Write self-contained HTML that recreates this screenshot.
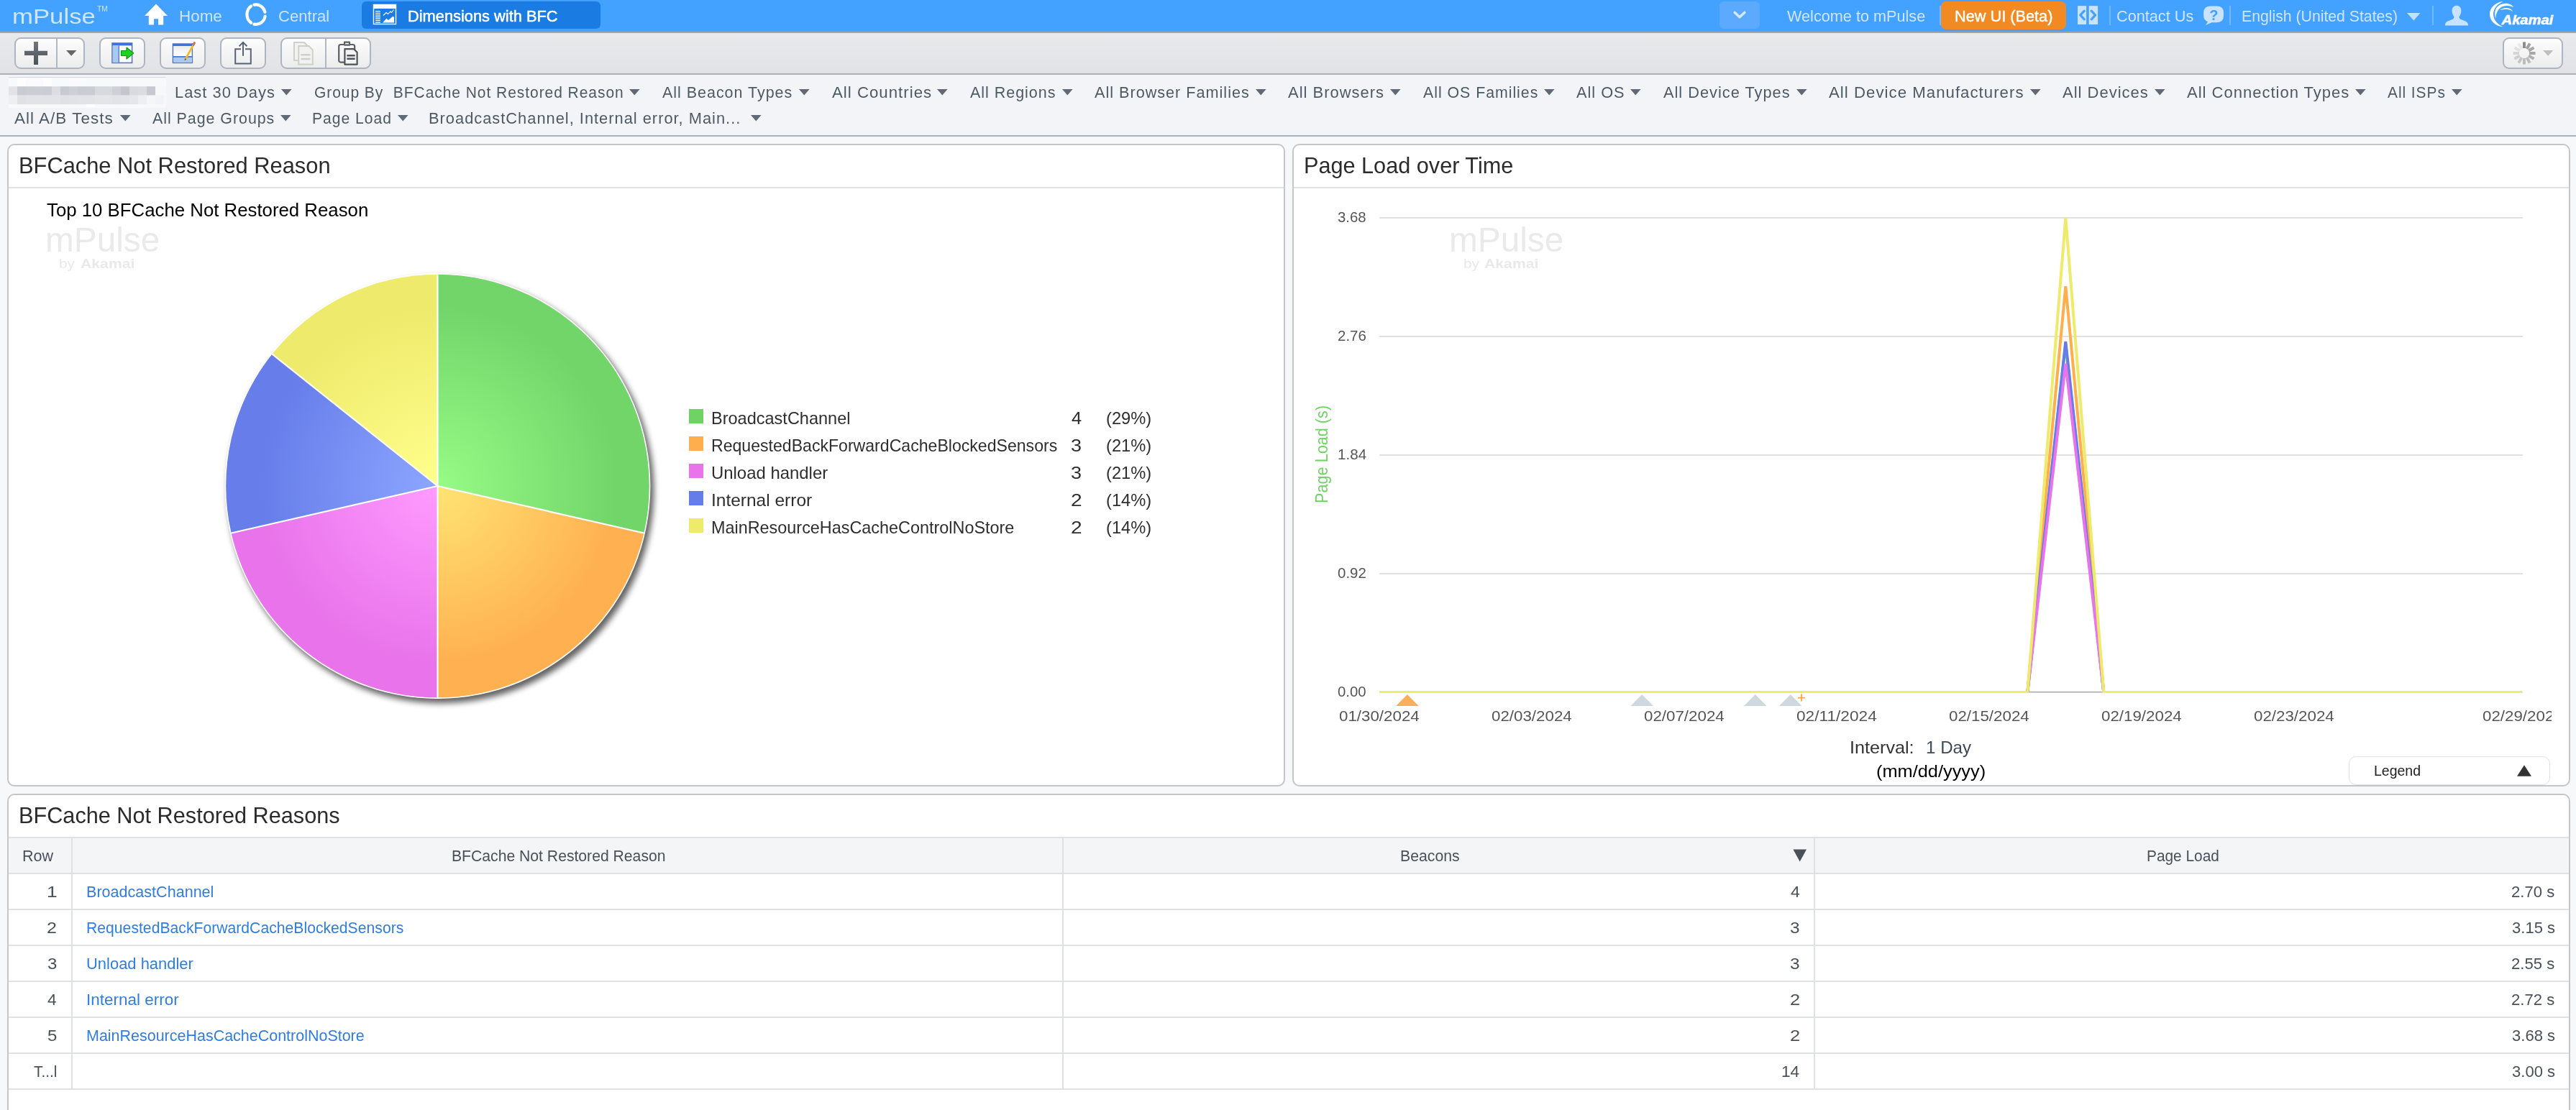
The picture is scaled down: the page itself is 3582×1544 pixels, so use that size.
<!DOCTYPE html>
<html><head><meta charset="utf-8"><title>mPulse - Dimensions with BFC</title>
<style>
html,body{margin:0;padding:0}
body{width:3582px;height:1544px;position:relative;overflow:hidden;background:#f7f8fa;font-family:"Liberation Sans", sans-serif;}
.t{position:absolute;white-space:nowrap;line-height:1;transform-origin:0 0;}

.btn{position:absolute;box-sizing:border-box;border:2px solid #adb5c0;border-radius:9px;background:linear-gradient(#fdfdfd,#ececec);}
.panel{position:absolute;box-sizing:border-box;border:2px solid #c6c6c6;border-radius:10px;background:#fff;}
</style></head><body>
<div style="position:absolute;left:0px;top:0px;width:3582px;height:44px;background:#43a1ff;"></div>
<div style="position:absolute;left:0px;top:44px;width:3582px;height:2px;background:#9ea5ad;"></div>
<div style="position:absolute;left:0px;top:46px;width:3582px;height:56px;background:linear-gradient(#e9eaec,#e1e2e6);"></div>
<div style="position:absolute;left:0px;top:102px;width:3582px;height:2px;background:#a9b1bb;"></div>
<div style="position:absolute;left:0px;top:104px;width:3582px;height:84px;background:#f3f4f8;"></div>
<div style="position:absolute;left:0px;top:188px;width:3582px;height:2px;background:#a9b1bb;"></div>
<span class="t" id="t0" style="left:16.7px;top:8px;font-size:30px;color:#cfe6ff;transform:scaleX(1.1580);font-weight:400;">mPulse</span>
<span class="t" id="t1" style="left:135.4px;top:8px;font-size:10px;color:#cfe6ff;transform:scaleX(1.0292);">TM</span>
<svg style="position:absolute;left:200px;top:5px;overflow:visible;" width="34" height="30" viewBox="0 0 34 30"><path d="M17 0.6 L33 17 L27.2 17 L27.2 29.4 L20 29.4 L20 21.2 L14.1 21.2 L14.1 29.4 L6.8 29.4 L6.8 17 L1 17 Z" fill="#fff"/></svg>
<span class="t" id="t2" style="left:248.5px;top:12px;font-size:22px;color:#cde5ff;transform:scaleX(1.0196);">Home</span>
<svg style="position:absolute;left:338px;top:2px;overflow:visible;" width="36" height="36" viewBox="0 0 36 36"><g fill="none" stroke="#fff" stroke-width="4.2" stroke-linecap="round"><path d="M15.46 4.60 A12.7 13.8 0 0 1 30.42 14.76"/><path d="M30.61 20.50 A12.7 13.8 0 0 1 15.46 31.60"/><path d="M11.18 29.67 A12.7 13.8 0 0 1 11.18 6.53"/></g></svg>
<span class="t" id="t3" style="left:386.9px;top:12px;font-size:22px;color:#cde5ff;transform:scaleX(1.0039);">Central</span>
<div style="position:absolute;left:503px;top:2px;width:332px;height:38px;background:#1a7be3;border-radius:6px;"></div>
<svg style="position:absolute;left:519px;top:6px;overflow:visible;" width="32" height="28" viewBox="0 0 32 28"><rect x="0.5" y="0.5" width="31" height="27" fill="none" stroke="#fff" stroke-width="1.4"/><rect x="0" y="0" width="32" height="6" fill="#fff"/><g stroke="#fff" stroke-width="1.3"><path d="M3 9.7H10M3 12.3H10M3 14.9H10M3 17.5H10M3 20.1H10M3 22.7H10M3 25.3H10"/></g><path d="M13 25.5 L18.5 19.5 L21 22 L27.5 16.5 L29 18 L29 25.5 Z" fill="#fff"/><path d="M14 15.5 L18 11.5 L20.5 13.5 L24 10 L25.5 11.5 L28.5 7.5" fill="none" stroke="#fff" stroke-width="1.1"/></svg>
<span class="t" id="t4" style="left:566.5px;top:12px;font-size:22px;color:#fff;transform:scaleX(0.9921);-webkit-text-stroke:0.5px #fff;">Dimensions with BFC</span>
<div style="position:absolute;left:2391px;top:2px;width:56px;height:38px;background:#5caaff;border-radius:6px;"></div>
<svg style="position:absolute;left:2410px;top:15px;overflow:visible;" width="18" height="12" viewBox="0 0 18 12"><path d="M2.2 2.5 L9 8.8 L15.8 2.5" fill="none" stroke="#d2e8ff" stroke-width="3.6" stroke-linecap="round" stroke-linejoin="round"/></svg>
<span class="t" id="t5" style="left:2485.3px;top:12px;font-size:22px;color:#cde5ff;transform:scaleX(0.9848);">Welcome to mPulse</span>
<div style="position:absolute;left:2697px;top:8px;width:2px;height:27.4px;background:#74b9ff;"></div>
<div style="position:absolute;left:2699px;top:2px;width:174px;height:39px;background:#f18a23;border-radius:7px;"></div>
<span class="t" id="t6" style="left:2717.8px;top:12px;font-size:22px;color:#fff;transform:scaleX(0.9875);-webkit-text-stroke:0.4px #fff;">New UI (Beta)</span>
<svg style="position:absolute;left:2889px;top:8px;overflow:visible;" width="28" height="26" viewBox="0 0 28 26"><rect x="0" y="0.2" width="12.1" height="25.8" fill="#c9e3ff"/><rect x="15.7" y="0.2" width="12.4" height="25.8" fill="#c9e3ff"/><path d="M9.2 7.2 L3.8 13 L9.2 18.8" fill="none" stroke="#43a1ff" stroke-width="3.3" stroke-linecap="round" stroke-linejoin="round"/><path d="M19.2 7.2 L24.6 13 L19.2 18.8" fill="none" stroke="#43a1ff" stroke-width="3.3" stroke-linecap="round" stroke-linejoin="round"/></svg>
<div style="position:absolute;left:2933px;top:8px;width:2px;height:27.4px;background:#74b9ff;"></div>
<span class="t" id="t7" style="left:2942.5px;top:12px;font-size:22px;color:#cde5ff;transform:scaleX(0.9858);">Contact Us</span>
<svg style="position:absolute;left:3064px;top:8px;overflow:visible;" width="30" height="28" viewBox="0 0 30 28"><path d="M10 0.4 H18.5 Q28 0.4 28 9.5 V14 Q28 23.2 18.5 23.2 H11.5 L3 27 L6 22.2 Q0.2 20.5 0.2 14 V9.5 Q0.2 0.4 10 0.4 Z" fill="#c9e3ff"/><text x="14.2" y="19.6" font-family="Liberation Sans, sans-serif" font-weight="bold" font-size="19.5" text-anchor="middle" fill="#43a1ff">?</text></svg>
<div style="position:absolute;left:3100px;top:8px;width:2px;height:27.4px;background:#74b9ff;"></div>
<span class="t" id="t8" style="left:3117.1px;top:12px;font-size:22px;color:#cde5ff;transform:scaleX(0.9647);">English (United States)</span>
<svg style="position:absolute;left:3347px;top:17.5px;overflow:visible;" width="19" height="11" viewBox="0 0 19 11"><path d="M0 0 H18.6 L9.3 10.6 Z" fill="#c2dfff"/></svg>
<div style="position:absolute;left:3382px;top:8px;width:2px;height:27.4px;background:#74b9ff;"></div>
<svg style="position:absolute;left:3399px;top:7px;overflow:visible;" width="34" height="29" viewBox="0 0 34 29"><path d="M17 0.8 C21.6 0.8 23.6 4.6 23.4 8.6 C23.2 12.2 21.8 14.6 20.6 16 C20.4 18 21 19.2 23.6 20.2 C28 21.8 32.6 23 33 27 L33 28.6 L1 28.6 L1 27 C1.4 23 6 21.8 10.4 20.2 C13 19.2 13.6 18 13.4 16 C12.2 14.6 10.8 12.2 10.6 8.6 C10.4 4.6 12.4 0.8 17 0.8 Z" fill="#c8e2ff"/></svg>
<svg style="position:absolute;left:3460px;top:1px;overflow:visible;" width="92" height="38" viewBox="0 0 92 38"><path d="M20.8 1 C9 2.5 2 10 2 18.6 C2 28 9.5 35.5 20.8 36.6 C12.5 33 7.1 26.5 7.1 18.6 C7.1 11 12.5 4.5 20.8 1 Z" fill="#fff"/><path d="M10.4 25 C8.4 19 8.6 12 13.5 7.5 C18.5 3 27 2.6 31.5 5.6 C33.2 6.8 34.4 8 35.1 9.3 C30.5 6.6 25 6.3 20.4 8 C14 10.4 10.4 17 10.4 25 Z" fill="#fff"/><path d="M16.1 13 C20 10 26 9 30 11 C32 12 33.4 13.4 34.1 14.9 C30.5 12.4 26.5 11.6 22.5 11.9 C20 12.1 18 12.5 16.1 13 Z" fill="#fff"/><text x="18.6" y="33.1" font-family="Liberation Sans, sans-serif" font-weight="bold" font-style="italic" font-size="18.8" textLength="71.6" lengthAdjust="spacingAndGlyphs" fill="#fff" stroke="#fff" stroke-width="0.5">Akamai</text></svg>
<div class="btn" style="left:20px;top:52px;width:98px;height:44px;"></div>
<div style="position:absolute;left:78.2px;top:54px;width:1.7px;height:40px;background:#b0b8c3;"></div>
<svg style="position:absolute;left:34px;top:58px;overflow:visible;" width="32" height="32" viewBox="0 0 32 32"><defs><linearGradient id="pg" x1="0" y1="0" x2="0" y2="1"><stop offset="0" stop-color="#6f767c"/><stop offset="1" stop-color="#4d5358"/></linearGradient></defs><path d="M13 0 H19 V12.8 H32 V19 H19 V32 H13 V19 H0 V12.8 H13 Z" fill="url(#pg)"/></svg>
<svg style="position:absolute;left:92px;top:70px;overflow:visible;" width="15" height="8" viewBox="0 0 15 8"><path d="M0 0 H14.4 L7.2 7.8 Z" fill="#666"/></svg>
<div class="btn" style="left:138px;top:52px;width:64px;height:44px;"></div>
<svg style="position:absolute;left:155px;top:59px;overflow:visible;" width="33" height="30" viewBox="0 0 33 30"><rect x="1" y="1" width="27.6" height="27.4" fill="#fff" stroke="#4f79cc" stroke-width="1.6"/><rect x="1" y="1" width="27.6" height="3.4" fill="#3f6fe0"/><rect x="1.8" y="4.4" width="8" height="23.4" fill="#a9c9ee"/><rect x="9.6" y="4.4" width="1.4" height="23.4" fill="#4f79cc"/><path d="M13.5 11.5 H21 V7 L30.6 15 L21 23 V18.5 H13.5 Z" fill="#1fd21f" stroke="#0c9c0c" stroke-width="1.2" stroke-linejoin="round"/></svg>
<div class="btn" style="left:222px;top:52px;width:64px;height:44px;"></div>
<svg style="position:absolute;left:239px;top:57px;overflow:visible;" width="34" height="32" viewBox="0 0 34 32"><defs><linearGradient id="wg" x1="0" y1="0" x2="0" y2="1"><stop offset="0" stop-color="#e6e6e6"/><stop offset="0.6" stop-color="#fff"/></linearGradient></defs><rect x="1.4" y="4" width="27" height="26.4" fill="url(#wg)" stroke="#5675b8" stroke-width="1.4"/><rect x="1.4" y="4" width="27" height="3" fill="#3f6fe0"/><rect x="2" y="22" width="25.8" height="8" fill="#a9c9ee"/><rect x="1.4" y="21" width="27" height="1.8" fill="#4f79cc"/><path d="M30.8 1 L33 2.6 L20.4 25.4 L17.6 27.2 L18 24 Z" fill="#f2b632"/><path d="M30.8 1 L33 2.6 L31.4 5.4 L29.2 4 Z" fill="#e0574f"/><path d="M29.2 4 L31.4 5.4 L30.4 7.2 L28.2 5.8 Z" fill="#8a8a8a"/><path d="M18 24 L20.4 25.4 L17.6 27.2 Z" fill="#7a5a30"/></svg>
<div class="btn" style="left:306px;top:52px;width:64px;height:44px;"></div>
<svg style="position:absolute;left:325px;top:57px;overflow:visible;" width="26" height="34" viewBox="0 0 26 34"><g fill="none" stroke="#566378" stroke-width="2"><path d="M10 11.2 H2.2 V31.6 H23.8 V11.2 H16"/><path d="M13 1.6 V20.8"/><path d="M7.6 7.2 L13 1.8 L18.4 7.2"/></g></svg>
<div class="btn" style="left:390px;top:52px;width:126px;height:44px;"></div>
<div style="position:absolute;left:452.4px;top:54px;width:1.7px;height:40px;background:#b0b8c3;"></div>
<svg style="position:absolute;left:407px;top:57px;overflow:visible;" width="30" height="34" viewBox="0 0 30 34"><g fill="#f2f2f0" stroke="#cfd0cb" stroke-width="2"><path d="M2 2 H16 L21.4 7.4 V27 H2 Z"/><path d="M8.2 7 H22.4 L27.8 12.4 V32.6 H8.2 Z"/></g><path d="M11.4 19.2 H24.6 M11.4 25 H24.6" stroke="#cfd0cb" stroke-width="2.4"/></svg>
<svg style="position:absolute;left:469px;top:57px;overflow:visible;" width="30" height="34" viewBox="0 0 30 34"><g fill="none" stroke="#5b6065" stroke-width="2.2" stroke-linejoin="round"><rect x="2.2" y="5" width="22" height="24.6" rx="2.6"/><rect x="10" y="1.6" width="7" height="4" fill="#f6f6f6"/></g><path d="M10.4 11.2 H23 L27.6 15.8 V32.6 H10.4 Z" fill="#f3f3f3" stroke="#4f5459" stroke-width="2.2" stroke-linejoin="round"/><path d="M13.4 20.2 H24.6 M13.4 24.8 H24.6" stroke="#4f5459" stroke-width="2.4"/></svg>
<div class="btn" style="left:3480px;top:52px;width:84px;height:44px;"></div>
<svg style="position:absolute;left:3494px;top:58px;overflow:visible;" width="32" height="32" viewBox="0 0 32 32"><g style="filter:blur(0.5px)"><path d="M16.00 9.00 L16.00 0.40" stroke="#8c8c8c" stroke-width="3.9"/><path d="M19.50 9.94 L23.80 2.49" stroke="#a0a0a0" stroke-width="3.9"/><path d="M22.06 12.50 L29.51 8.20" stroke="#a8a8a8" stroke-width="3.9"/><path d="M23.00 16.00 L31.60 16.00" stroke="#a6a6a6" stroke-width="3.9"/><path d="M22.06 19.50 L29.51 23.80" stroke="#b0b0b0" stroke-width="3.9"/><path d="M19.50 22.06 L23.80 29.51" stroke="#bababa" stroke-width="3.9"/><path d="M16.00 23.00 L16.00 31.60" stroke="#bcbcbc" stroke-width="3.9"/><path d="M12.50 22.06 L8.20 29.51" stroke="#c4c4c4" stroke-width="3.9"/><path d="M9.94 19.50 L2.49 23.80" stroke="#cecece" stroke-width="3.9"/><path d="M9.00 16.00 L0.40 16.00" stroke="#d4d4d4" stroke-width="3.9"/><path d="M9.94 12.50 L2.49 8.20" stroke="#e0e0e0" stroke-width="3.9"/><path d="M12.50 9.94 L8.20 2.49" stroke="#e9e9e9" stroke-width="3.9"/></g></svg>
<svg style="position:absolute;left:3536px;top:70px;overflow:visible;" width="15" height="8" viewBox="0 0 15 8"><path d="M0 0 H14.4 L7.2 7.8 Z" fill="#bfbfbf"/></svg>
<div style="position:absolute;left:12px;top:107px;width:219px;height:1.4px;background:#d7dbdf;"></div>
<div style="position:absolute;left:12px;top:108.6px;width:219px;height:41px;background:#f8f9fb;"></div>
<svg style="position:absolute;left:0px;top:0px;overflow:visible;" width="240" height="152" viewBox="0 0 240 152"><rect x="12" y="108.6" width="12.3" height="11.9" fill="#f8f9fb"/><rect x="24" y="108.6" width="12.3" height="11.9" fill="#fdfdfe"/><rect x="36" y="108.6" width="12.3" height="11.9" fill="#fbfbfd"/><rect x="48" y="108.6" width="12.3" height="11.9" fill="#fbfbfd"/><rect x="60" y="108.6" width="12.3" height="11.9" fill="#fdfdfe"/><rect x="72" y="108.6" width="12.3" height="11.9" fill="#f8f9fb"/><rect x="84" y="108.6" width="12.3" height="11.9" fill="#f8f9fb"/><rect x="96" y="108.6" width="12.3" height="11.9" fill="#fafafc"/><rect x="108" y="108.6" width="12.3" height="11.9" fill="#f9fafc"/><rect x="120" y="108.6" width="12.3" height="11.9" fill="#f8f9fb"/><rect x="132" y="108.6" width="12.3" height="11.9" fill="#f8f9fb"/><rect x="144" y="108.6" width="12.3" height="11.9" fill="#f8f9fb"/><rect x="156" y="108.6" width="12.3" height="11.9" fill="#f8f9fb"/><rect x="168" y="108.6" width="12.3" height="11.9" fill="#f8f9fb"/><rect x="180" y="108.6" width="12.3" height="11.9" fill="#f8f9fb"/><rect x="192" y="108.6" width="12.3" height="11.9" fill="#f8f9fb"/><rect x="204" y="108.6" width="12.3" height="11.9" fill="#f8f9fb"/><rect x="216" y="108.6" width="12.3" height="11.9" fill="#f8f9fb"/><rect x="228" y="108.6" width="3.3" height="11.9" fill="#f8f9fb"/><rect x="12" y="120.2" width="12.3" height="12.6" fill="#e2e3e7"/><rect x="24" y="120.2" width="12.3" height="12.6" fill="#c8cbd2"/><rect x="36" y="120.2" width="12.3" height="12.6" fill="#cacdd4"/><rect x="48" y="120.2" width="12.3" height="12.6" fill="#cbced4"/><rect x="60" y="120.2" width="12.3" height="12.6" fill="#cacdd3"/><rect x="72" y="120.2" width="12.3" height="12.6" fill="#dcdde2"/><rect x="84" y="120.2" width="12.3" height="12.6" fill="#c7cbd1"/><rect x="96" y="120.2" width="12.3" height="12.6" fill="#cdd0d6"/><rect x="108" y="120.2" width="12.3" height="12.6" fill="#c9ccd3"/><rect x="120" y="120.2" width="12.3" height="12.6" fill="#c9ccd3"/><rect x="132" y="120.2" width="12.3" height="12.6" fill="#d6d9dd"/><rect x="144" y="120.2" width="12.3" height="12.6" fill="#d7dadd"/><rect x="156" y="120.2" width="12.3" height="12.6" fill="#cfd1d7"/><rect x="168" y="120.2" width="12.3" height="12.6" fill="#c3c7cd"/><rect x="180" y="120.2" width="12.3" height="12.6" fill="#d9dade"/><rect x="192" y="120.2" width="12.3" height="12.6" fill="#dbdcdf"/><rect x="204" y="120.2" width="12.3" height="12.6" fill="#c5cad0"/><rect x="216" y="120.2" width="12.3" height="12.6" fill="#f7f8fa"/><rect x="228" y="120.2" width="3.3" height="12.6" fill="#f7f8fa"/><rect x="12" y="132.5" width="12.3" height="12.7" fill="#eeeff2"/><rect x="24" y="132.5" width="12.3" height="12.7" fill="#e0e1e5"/><rect x="36" y="132.5" width="12.3" height="12.7" fill="#e2e3e7"/><rect x="48" y="132.5" width="12.3" height="12.7" fill="#e2e3e7"/><rect x="60" y="132.5" width="12.3" height="12.7" fill="#e2e3e7"/><rect x="72" y="132.5" width="12.3" height="12.7" fill="#e2e3e7"/><rect x="84" y="132.5" width="12.3" height="12.7" fill="#e0e1e5"/><rect x="96" y="132.5" width="12.3" height="12.7" fill="#e1e2e6"/><rect x="108" y="132.5" width="12.3" height="12.7" fill="#e2e3e7"/><rect x="120" y="132.5" width="12.3" height="12.7" fill="#e2e3e7"/><rect x="132" y="132.5" width="12.3" height="12.7" fill="#e3e5e8"/><rect x="144" y="132.5" width="12.3" height="12.7" fill="#e3e5e8"/><rect x="156" y="132.5" width="12.3" height="12.7" fill="#e1e3e6"/><rect x="168" y="132.5" width="12.3" height="12.7" fill="#e2e4e7"/><rect x="180" y="132.5" width="12.3" height="12.7" fill="#e4e6e9"/><rect x="192" y="132.5" width="12.3" height="12.7" fill="#eeeff2"/><rect x="204" y="132.5" width="12.3" height="12.7" fill="#f5f6f8"/><rect x="216" y="132.5" width="12.3" height="12.7" fill="#f2f3f6"/><rect x="228" y="132.5" width="3.3" height="12.7" fill="#f7f8fa"/><rect x="120" y="144.9" width="12" height="4.6" fill="#fefefe"/></svg>
<span class="t" id="t9" style="left:242.8px;top:118px;font-size:22px;color:#4d5964;transform:scaleX(0.9963);letter-spacing:1px;">Last 30 Days</span>
<svg style="position:absolute;left:390.6px;top:124.20000000000002px;overflow:visible;" width="15" height="9" viewBox="0 0 15 9"><path d="M0 0 H14.6 L7.3 8.4 Z" fill="#5f6a76"/></svg>
<span class="t" id="t10" style="left:437.4px;top:118px;font-size:22px;color:#4d5964;transform:scaleX(0.9538);letter-spacing:1px;">Group By&nbsp; BFCache Not Restored Reason</span>
<svg style="position:absolute;left:875px;top:124.20000000000002px;overflow:visible;" width="15" height="9" viewBox="0 0 15 9"><path d="M0 0 H14.6 L7.3 8.4 Z" fill="#5f6a76"/></svg>
<span class="t" id="t11" style="left:921.4px;top:118px;font-size:22px;color:#4d5964;transform:scaleX(0.9763);letter-spacing:1px;">All Beacon Types</span>
<svg style="position:absolute;left:1111px;top:124.20000000000002px;overflow:visible;" width="15" height="9" viewBox="0 0 15 9"><path d="M0 0 H14.6 L7.3 8.4 Z" fill="#5f6a76"/></svg>
<span class="t" id="t12" style="left:1156.5px;top:118px;font-size:22px;color:#4d5964;transform:scaleX(1.0104);letter-spacing:1px;">All Countries</span>
<svg style="position:absolute;left:1303.4px;top:124.20000000000002px;overflow:visible;" width="15" height="9" viewBox="0 0 15 9"><path d="M0 0 H14.6 L7.3 8.4 Z" fill="#5f6a76"/></svg>
<span class="t" id="t13" style="left:1349.3px;top:118px;font-size:22px;color:#4d5964;transform:scaleX(0.9764);letter-spacing:1px;">All Regions</span>
<svg style="position:absolute;left:1477px;top:124.20000000000002px;overflow:visible;" width="15" height="9" viewBox="0 0 15 9"><path d="M0 0 H14.6 L7.3 8.4 Z" fill="#5f6a76"/></svg>
<span class="t" id="t14" style="left:1521.9px;top:118px;font-size:22px;color:#4d5964;transform:scaleX(0.9842);letter-spacing:1px;">All Browser Families</span>
<svg style="position:absolute;left:1746px;top:124.20000000000002px;overflow:visible;" width="15" height="9" viewBox="0 0 15 9"><path d="M0 0 H14.6 L7.3 8.4 Z" fill="#5f6a76"/></svg>
<span class="t" id="t15" style="left:1790.9px;top:118px;font-size:22px;color:#4d5964;transform:scaleX(0.9984);letter-spacing:1px;">All Browsers</span>
<svg style="position:absolute;left:1932.7px;top:124.20000000000002px;overflow:visible;" width="15" height="9" viewBox="0 0 15 9"><path d="M0 0 H14.6 L7.3 8.4 Z" fill="#5f6a76"/></svg>
<span class="t" id="t16" style="left:1978.6px;top:118px;font-size:22px;color:#4d5964;transform:scaleX(0.9693);letter-spacing:1px;">All OS Families</span>
<svg style="position:absolute;left:2146.7px;top:124.20000000000002px;overflow:visible;" width="15" height="9" viewBox="0 0 15 9"><path d="M0 0 H14.6 L7.3 8.4 Z" fill="#5f6a76"/></svg>
<span class="t" id="t17" style="left:2192.1px;top:118px;font-size:22px;color:#4d5964;transform:scaleX(0.9893);letter-spacing:1px;">All OS</span>
<svg style="position:absolute;left:2267.3px;top:124.20000000000002px;overflow:visible;" width="15" height="9" viewBox="0 0 15 9"><path d="M0 0 H14.6 L7.3 8.4 Z" fill="#5f6a76"/></svg>
<span class="t" id="t18" style="left:2313.4px;top:118px;font-size:22px;color:#4d5964;transform:scaleX(0.9905);letter-spacing:1px;">All Device Types</span>
<svg style="position:absolute;left:2497.6px;top:124.20000000000002px;overflow:visible;" width="15" height="9" viewBox="0 0 15 9"><path d="M0 0 H14.6 L7.3 8.4 Z" fill="#5f6a76"/></svg>
<span class="t" id="t19" style="left:2542.9px;top:118px;font-size:22px;color:#4d5964;transform:scaleX(1.0112);letter-spacing:1px;">All Device Manufacturers</span>
<svg style="position:absolute;left:2822.5px;top:124.20000000000002px;overflow:visible;" width="15" height="9" viewBox="0 0 15 9"><path d="M0 0 H14.6 L7.3 8.4 Z" fill="#5f6a76"/></svg>
<span class="t" id="t20" style="left:2867.8px;top:118px;font-size:22px;color:#4d5964;transform:scaleX(1.0002);letter-spacing:1px;">All Devices</span>
<svg style="position:absolute;left:2995.7px;top:124.20000000000002px;overflow:visible;" width="15" height="9" viewBox="0 0 15 9"><path d="M0 0 H14.6 L7.3 8.4 Z" fill="#5f6a76"/></svg>
<span class="t" id="t21" style="left:3041.0px;top:118px;font-size:22px;color:#4d5964;transform:scaleX(1.0003);letter-spacing:1px;">All Connection Types</span>
<svg style="position:absolute;left:3274.9px;top:124.20000000000002px;overflow:visible;" width="15" height="9" viewBox="0 0 15 9"><path d="M0 0 H14.6 L7.3 8.4 Z" fill="#5f6a76"/></svg>
<span class="t" id="t22" style="left:3320.2px;top:118px;font-size:22px;color:#4d5964;transform:scaleX(0.9508);letter-spacing:1px;">All ISPs</span>
<svg style="position:absolute;left:3408.8px;top:124.20000000000002px;overflow:visible;" width="15" height="9" viewBox="0 0 15 9"><path d="M0 0 H14.6 L7.3 8.4 Z" fill="#5f6a76"/></svg>
<span class="t" id="t23" style="left:20.3px;top:154px;font-size:22px;color:#4d5964;transform:scaleX(1.0215);letter-spacing:1px;">All A/B Tests</span>
<svg style="position:absolute;left:166.7px;top:160.20000000000002px;overflow:visible;" width="15" height="9" viewBox="0 0 15 9"><path d="M0 0 H14.6 L7.3 8.4 Z" fill="#5f6a76"/></svg>
<span class="t" id="t24" style="left:211.7px;top:154px;font-size:22px;color:#4d5964;transform:scaleX(0.9719);letter-spacing:1px;">All Page Groups</span>
<svg style="position:absolute;left:390.3px;top:160.20000000000002px;overflow:visible;" width="15" height="9" viewBox="0 0 15 9"><path d="M0 0 H14.6 L7.3 8.4 Z" fill="#5f6a76"/></svg>
<span class="t" id="t25" style="left:434.0px;top:154px;font-size:22px;color:#4d5964;transform:scaleX(0.9612);letter-spacing:1px;">Page Load</span>
<svg style="position:absolute;left:553px;top:160.20000000000002px;overflow:visible;" width="15" height="9" viewBox="0 0 15 9"><path d="M0 0 H14.6 L7.3 8.4 Z" fill="#5f6a76"/></svg>
<span class="t" id="t26" style="left:595.9px;top:154px;font-size:22px;color:#4d5964;transform:scaleX(0.9933);letter-spacing:1px;">BroadcastChannel, Internal error, Main...</span>
<svg style="position:absolute;left:1044.4px;top:160.20000000000002px;overflow:visible;" width="15" height="9" viewBox="0 0 15 9"><path d="M0 0 H14.6 L7.3 8.4 Z" fill="#5f6a76"/></svg>
<div class="panel" style="left:10px;top:200px;width:1777px;height:894px;"></div>
<div class="panel" style="left:1797px;top:200px;width:1777px;height:894px;"></div>
<div class="panel" style="left:10px;top:1104px;width:3564px;height:470px;"></div>
<div style="position:absolute;left:12px;top:260px;width:1773px;height:2px;background:#dfe1e4;"></div>
<div style="position:absolute;left:1799px;top:260px;width:1773px;height:2px;background:#dfe1e4;"></div>
<div style="position:absolute;left:12px;top:1164px;width:3560px;height:2px;background:#dfe1e4;"></div>
<span class="t" id="t27" style="left:25.8px;top:214px;font-size:32px;color:#2b2b2b;transform:scaleX(0.9634);">BFCache Not Restored Reason</span>
<span class="t" id="t28" style="left:1813.3px;top:214px;font-size:32px;color:#2b2b2b;transform:scaleX(0.9576);">Page Load over Time</span>
<span class="t" id="t29" style="left:25.8px;top:1118px;font-size:32px;color:#2b2b2b;transform:scaleX(0.9584);">BFCache Not Restored Reasons</span>
<span class="t" id="t30" style="left:64.8px;top:279px;font-size:26px;color:#000;transform:scaleX(0.9919);">Top 10 BFCache Not Restored Reason</span>
<span class="t" id="t31" style="left:63.0px;top:310px;font-size:48px;color:#eaeaea;transform:scaleX(0.9952);filter:blur(0.7px);">mPulse</span>
<span class="t" id="t32" style="left:82.3px;top:357px;font-size:19px;color:#e9e9e9;transform:scaleX(1.0895);filter:blur(0.6px);">by</span>
<span class="t" id="t33" style="left:111.5px;top:357px;font-size:19px;color:#e9e9e9;font-weight:700;transform:scaleX(1.1157);filter:blur(0.6px);">Akamai</span>
<span class="t" id="t34" style="left:2015.4px;top:310px;font-size:48px;color:#eaeaea;transform:scaleX(0.9952);filter:blur(0.7px);">mPulse</span>
<span class="t" id="t35" style="left:2034.7px;top:357px;font-size:19px;color:#e9e9e9;transform:scaleX(1.0895);filter:blur(0.6px);">by</span>
<span class="t" id="t36" style="left:2063.9px;top:357px;font-size:19px;color:#e9e9e9;font-weight:700;transform:scaleX(1.1157);filter:blur(0.6px);">Akamai</span>
<svg style="position:absolute;left:0px;top:0px;overflow:visible;" width="1300" height="1100" viewBox="0 0 1300 1100"><defs><radialGradient id="g0" gradientUnits="userSpaceOnUse" cx="608.5" cy="676.0" r="294.3"><stop offset="0" stop-color="#97fb86"/><stop offset="0.85" stop-color="#72d56a"/><stop offset="1" stop-color="#72d56a"/></radialGradient><radialGradient id="g1" gradientUnits="userSpaceOnUse" cx="608.5" cy="676.0" r="294.3"><stop offset="0" stop-color="#ffe473"/><stop offset="0.85" stop-color="#ffb050"/><stop offset="1" stop-color="#ffb050"/></radialGradient><radialGradient id="g2" gradientUnits="userSpaceOnUse" cx="608.5" cy="676.0" r="294.3"><stop offset="0" stop-color="#ff9bff"/><stop offset="0.85" stop-color="#e873ea"/><stop offset="1" stop-color="#e873ea"/></radialGradient><radialGradient id="g3" gradientUnits="userSpaceOnUse" cx="608.5" cy="676.0" r="294.3"><stop offset="0" stop-color="#8da6ff"/><stop offset="0.85" stop-color="#667dea"/><stop offset="1" stop-color="#667dea"/></radialGradient><radialGradient id="g4" gradientUnits="userSpaceOnUse" cx="608.5" cy="676.0" r="294.3"><stop offset="0" stop-color="#ffff8c"/><stop offset="0.85" stop-color="#eeea6c"/><stop offset="1" stop-color="#eeea6c"/></radialGradient><filter id="ps" x="-10%" y="-10%" width="125%" height="125%"><feGaussianBlur stdDeviation="4.2"/></filter></defs><circle cx="613.0" cy="682.0" r="296.3" fill="#000" opacity="0.62" filter="url(#ps)"/><circle cx="608.5" cy="676.0" r="295.90000000000003" fill="#fff"/><path d="M608.5 676.0 L608.50 381.70 A294.3 294.3 0 0 1 895.42 741.49 Z" fill="url(#g0)"/><path d="M608.5 676.0 L895.42 741.49 A294.3 294.3 0 0 1 608.50 970.30 Z" fill="url(#g1)"/><path d="M608.5 676.0 L608.50 970.30 A294.3 294.3 0 0 1 321.58 741.49 Z" fill="url(#g2)"/><path d="M608.5 676.0 L321.58 741.49 A294.3 294.3 0 0 1 378.41 492.51 Z" fill="url(#g3)"/><path d="M608.5 676.0 L378.41 492.51 A294.3 294.3 0 0 1 608.50 381.70 Z" fill="url(#g4)"/><path d="M608.5 676.0 L608.50 381.70" stroke="#fff" stroke-width="2.2"/><path d="M608.5 676.0 L895.42 741.49" stroke="#fff" stroke-width="2.2"/><path d="M608.5 676.0 L608.50 970.30" stroke="#fff" stroke-width="2.2"/><path d="M608.5 676.0 L321.58 741.49" stroke="#fff" stroke-width="2.2"/><path d="M608.5 676.0 L378.41 492.51" stroke="#fff" stroke-width="2.2"/></svg>
<div style="position:absolute;left:958px;top:569px;width:20px;height:20px;background:#70d265;"></div>
<span class="t" id="t37" style="left:989.1px;top:570px;font-size:24px;color:#2e2e2e;transform:scaleX(0.9799);">BroadcastChannel</span>
<span class="t" id="t38" style="left:1489.8px;top:570px;font-size:24px;color:#2e2e2e;transform:scaleX(1.0574);">4</span>
<span class="t" id="t39" style="left:1537.8px;top:570px;font-size:24px;color:#2e2e2e;transform:scaleX(0.9860);">(29%)</span>
<div style="position:absolute;left:958px;top:607px;width:20px;height:20px;background:#ffae4e;"></div>
<span class="t" id="t40" style="left:989.1px;top:608px;font-size:24px;color:#2e2e2e;transform:scaleX(0.9619);">RequestedBackForwardCacheBlockedSensors</span>
<span class="t" id="t41" style="left:1489.4px;top:608px;font-size:24px;color:#2e2e2e;transform:scaleX(1.1237);">3</span>
<span class="t" id="t42" style="left:1537.8px;top:608px;font-size:24px;color:#2e2e2e;transform:scaleX(0.9860);">(21%)</span>
<div style="position:absolute;left:958px;top:645px;width:20px;height:20px;background:#e873ea;"></div>
<span class="t" id="t43" style="left:989.2px;top:646px;font-size:24px;color:#2e2e2e;transform:scaleX(0.9960);">Unload handler</span>
<span class="t" id="t44" style="left:1489.4px;top:646px;font-size:24px;color:#2e2e2e;transform:scaleX(1.1237);">3</span>
<span class="t" id="t45" style="left:1537.8px;top:646px;font-size:24px;color:#2e2e2e;transform:scaleX(0.9860);">(21%)</span>
<div style="position:absolute;left:958px;top:683px;width:20px;height:20px;background:#657de8;"></div>
<span class="t" id="t46" style="left:988.7px;top:684px;font-size:24px;color:#2e2e2e;transform:scaleX(1.0202);">Internal error</span>
<span class="t" id="t47" style="left:1489.0px;top:684px;font-size:24px;color:#2e2e2e;transform:scaleX(1.1695);">2</span>
<span class="t" id="t48" style="left:1537.8px;top:684px;font-size:24px;color:#2e2e2e;transform:scaleX(0.9860);">(14%)</span>
<div style="position:absolute;left:958px;top:721px;width:20px;height:20px;background:#eeea6a;"></div>
<span class="t" id="t49" style="left:989.1px;top:722px;font-size:24px;color:#2e2e2e;transform:scaleX(0.9749);">MainResourceHasCacheControlNoStore</span>
<span class="t" id="t50" style="left:1489.0px;top:722px;font-size:24px;color:#2e2e2e;transform:scaleX(1.1695);">2</span>
<span class="t" id="t51" style="left:1537.8px;top:722px;font-size:24px;color:#2e2e2e;transform:scaleX(0.9860);">(14%)</span>
<svg style="position:absolute;left:0px;top:0px;overflow:visible;" width="3582" height="1100" viewBox="0 0 3582 1100"><defs><clipPath id="plot"><rect x="1900" y="302" width="1700" height="661"/></clipPath></defs><path d="M1918 303.0 H3508" stroke="#e1e1e1" stroke-width="2"/><path d="M1918 468.0 H3508" stroke="#e1e1e1" stroke-width="2"/><path d="M1918 633.0 H3508" stroke="#e1e1e1" stroke-width="2"/><path d="M1918 798.0 H3508" stroke="#e1e1e1" stroke-width="2"/><path d="M1918 963.0 H3508" stroke="#e1e1e1" stroke-width="2"/><g clip-path="url(#plot)"><path d="M1918 963.0 L2819.3 963.0 L2872.3 478.8 L2925.3 963.0 L3507 963.0" fill="none" stroke="#70d265" stroke-width="4" stroke-linejoin="bevel"/><path d="M1918 963.0 L2819.3 963.0 L2872.3 398.1 L2925.3 963.0 L3507 963.0" fill="none" stroke="#ffae4e" stroke-width="4" stroke-linejoin="bevel"/><path d="M1918 963.0 L2819.3 963.0 L2872.3 475.2 L2925.3 963.0 L3507 963.0" fill="none" stroke="#657de8" stroke-width="4" stroke-linejoin="bevel"/><path d="M1918 963.0 L2819.3 963.0 L2872.3 505.7 L2925.3 963.0 L3507 963.0" fill="none" stroke="#e873ea" stroke-width="4" stroke-linejoin="bevel"/><path d="M1918 963.0 L2819.3 963.0 L2872.3 303.0 L2925.3 963.0 L3507 963.0" fill="none" stroke="#eeea6a" stroke-width="4" stroke-linejoin="bevel"/></g><path d="M2821.8 962.5 H2922.8" stroke="#9a9a9a" stroke-width="1"/><path d="M1941.1 981.9 L1956.9 966 L1972.7 981.9 Z" fill="#fcae5b"/><path d="M2267.4 981.9 L2283.2 966 L2299.0 981.9 Z" fill="#cfd8dc"/><path d="M2425.0 981.9 L2440.8 966 L2456.6 981.9 Z" fill="#cfd8dc"/><path d="M2473.9 981.9 L2489.7 966 L2505.5 981.9 Z" fill="#cfd8dc"/><path d="M2500 970.6 H2510 M2505 965.6 V975.6" stroke="#f7a54f" stroke-width="1.8"/></svg>
<span class="t" id="t52" style="left:1860.4px;top:291px;font-size:21px;color:#555;transform:scaleX(0.9703);">3.68</span>
<span class="t" id="t53" style="left:1860.2px;top:456px;font-size:21px;color:#555;transform:scaleX(0.9770);">2.76</span>
<span class="t" id="t54" style="left:1859.6px;top:621px;font-size:21px;color:#555;transform:scaleX(0.9829);">1.84</span>
<span class="t" id="t55" style="left:1860.4px;top:786px;font-size:21px;color:#555;transform:scaleX(0.9744);">0.92</span>
<span class="t" id="t56" style="left:1860.4px;top:951px;font-size:21px;color:#555;transform:scaleX(0.9685);">0.00</span>
<span class="t" id="t57" style="left:1861.9px;top:985px;font-size:21px;color:#555;transform:scaleX(1.0629);">01/30/2024</span>
<span class="t" id="t58" style="left:2073.9px;top:985px;font-size:21px;color:#555;transform:scaleX(1.0629);">02/03/2024</span>
<span class="t" id="t59" style="left:2285.9px;top:985px;font-size:21px;color:#555;transform:scaleX(1.0629);">02/07/2024</span>
<span class="t" id="t60" style="left:2497.9px;top:985px;font-size:21px;color:#555;transform:scaleX(1.0792);">02/11/2024</span>
<span class="t" id="t61" style="left:2709.9px;top:985px;font-size:21px;color:#555;transform:scaleX(1.0629);">02/15/2024</span>
<span class="t" id="t62" style="left:2921.9px;top:985px;font-size:21px;color:#555;transform:scaleX(1.0629);">02/19/2024</span>
<span class="t" id="t63" style="left:3133.9px;top:985px;font-size:21px;color:#555;transform:scaleX(1.0629);">02/23/2024</span>
<div style="position:absolute;left:3440px;top:980px;width:108px;height:32px;overflow:hidden;">
<span class="t" id="t64" style="left:11.7px;top:5px;font-size:21px;color:#555;transform:scaleX(1.0629);">02/29/2024</span>
</div>
<div style="position:absolute;left:1845.6px;top:631.8px;width:0;height:0;transform:rotate(-90deg);">
<span class="t" id="t65" style="left:-68.3px;top:-20px;font-size:24px;color:#70d265;transform:scaleX(0.9029);">Page Load (s)</span>
</div>
<span class="t" id="t66" style="left:2571.7px;top:1028px;font-size:24px;color:#333;transform:scaleX(1.0498);">Interval:</span>
<span class="t" id="t67" style="left:2678.0px;top:1028px;font-size:24px;color:#3e4959;transform:scaleX(1.0061);">1 Day</span>
<span class="t" id="t68" style="left:2608.9px;top:1061px;font-size:24px;color:#000;transform:scaleX(1.0566);">(mm/dd/yyyy)</span>
<div style="position:absolute;left:3266px;top:1052px;width:280px;height:39.5px;box-sizing:border-box;border:1.5px solid #e2e4e7;border-radius:10px;background:#fff;"></div>
<span class="t" id="t69" style="left:3301.4px;top:1062px;font-size:20px;color:#222;transform:scaleX(0.9746);">Legend</span>
<svg style="position:absolute;left:3499px;top:1064px;overflow:visible;" width="22" height="17" viewBox="0 0 22 17"><path d="M1 15.7 L11 0.3 L21 15.7 Z" fill="#333"/></svg>
<div style="position:absolute;left:12px;top:1166px;width:3560px;height:48px;background:#f3f5f7;"></div>
<div style="position:absolute;left:12px;top:1214px;width:3560px;height:2px;background:#dfe1e4;"></div>
<div style="position:absolute;left:12px;top:1264px;width:3560px;height:2px;background:#dfe1e4;"></div>
<div style="position:absolute;left:12px;top:1314px;width:3560px;height:2px;background:#dfe1e4;"></div>
<div style="position:absolute;left:12px;top:1364px;width:3560px;height:2px;background:#dfe1e4;"></div>
<div style="position:absolute;left:12px;top:1414px;width:3560px;height:2px;background:#dfe1e4;"></div>
<div style="position:absolute;left:12px;top:1464px;width:3560px;height:2px;background:#dfe1e4;"></div>
<div style="position:absolute;left:12px;top:1514px;width:3560px;height:2px;background:#dfe1e4;"></div>
<div style="position:absolute;left:99px;top:1166px;width:2px;height:350px;background:#dfe1e4;"></div>
<div style="position:absolute;left:1477px;top:1166px;width:2px;height:350px;background:#dfe1e4;"></div>
<div style="position:absolute;left:2522px;top:1166px;width:2px;height:350px;background:#dfe1e4;"></div>
<span class="t" id="t70" style="left:30.9px;top:1180px;font-size:22px;color:#4a5058;transform:scaleX(0.9772);">Row</span>
<span class="t" id="t71" style="left:628.2px;top:1180px;font-size:22px;color:#4a5058;transform:scaleX(0.9616);">BFCache Not Restored Reason</span>
<span class="t" id="t72" style="left:1946.5px;top:1180px;font-size:22px;color:#4a5058;transform:scaleX(0.9648);">Beacons</span>
<span class="t" id="t73" style="left:2985.2px;top:1180px;font-size:22px;color:#4a5058;transform:scaleX(0.9475);">Page Load</span>
<svg style="position:absolute;left:2493px;top:1181px;overflow:visible;" width="20" height="18" viewBox="0 0 20 18"><path d="M0.4 0.4 H19 L9.7 17.4 Z" fill="#4a5058"/></svg>
<span class="t" id="t74" style="left:64.6px;top:1230px;font-size:22px;color:#4a5058;transform:scaleX(1.2000);">1</span>
<span class="t" id="t75" style="left:120.1px;top:1230px;font-size:22px;color:#2f7de1;transform:scaleX(0.9801);">BroadcastChannel</span>
<span class="t" id="t76" style="left:2489.8px;top:1230px;font-size:22px;color:#4a5058;transform:scaleX(1.0450);">4</span>
<span class="t" id="t77" style="left:3492.2px;top:1230px;font-size:22px;color:#4a5058;transform:scaleX(1.0063);">2.70 s</span>
<span class="t" id="t78" style="left:65.3px;top:1280px;font-size:22px;color:#4a5058;transform:scaleX(1.1358);">2</span>
<span class="t" id="t79" style="left:120.2px;top:1280px;font-size:22px;color:#2f7de1;transform:scaleX(0.9623);">RequestedBackForwardCacheBlockedSensors</span>
<span class="t" id="t80" style="left:2489.4px;top:1280px;font-size:22px;color:#4a5058;transform:scaleX(1.1105);">3</span>
<span class="t" id="t81" style="left:3492.5px;top:1280px;font-size:22px;color:#4a5058;transform:scaleX(1.0016);">3.15 s</span>
<span class="t" id="t82" style="left:65.7px;top:1330px;font-size:22px;color:#4a5058;transform:scaleX(1.0914);">3</span>
<span class="t" id="t83" style="left:120.2px;top:1330px;font-size:22px;color:#2f7de1;transform:scaleX(0.9975);">Unload handler</span>
<span class="t" id="t84" style="left:2489.4px;top:1330px;font-size:22px;color:#4a5058;transform:scaleX(1.1105);">3</span>
<span class="t" id="t85" style="left:3492.2px;top:1330px;font-size:22px;color:#4a5058;transform:scaleX(1.0063);">2.55 s</span>
<span class="t" id="t86" style="left:66.1px;top:1380px;font-size:22px;color:#4a5058;transform:scaleX(1.0270);">4</span>
<span class="t" id="t87" style="left:119.8px;top:1380px;font-size:22px;color:#2f7de1;transform:scaleX(1.0230);">Internal error</span>
<span class="t" id="t88" style="left:2489.0px;top:1380px;font-size:22px;color:#4a5058;transform:scaleX(1.1557);">2</span>
<span class="t" id="t89" style="left:3492.2px;top:1380px;font-size:22px;color:#4a5058;transform:scaleX(1.0063);">2.72 s</span>
<span class="t" id="t90" style="left:65.6px;top:1430px;font-size:22px;color:#4a5058;transform:scaleX(1.0914);">5</span>
<span class="t" id="t91" style="left:120.1px;top:1430px;font-size:22px;color:#2f7de1;transform:scaleX(0.9761);">MainResourceHasCacheControlNoStore</span>
<span class="t" id="t92" style="left:2489.0px;top:1430px;font-size:22px;color:#4a5058;transform:scaleX(1.1557);">2</span>
<span class="t" id="t93" style="left:3492.5px;top:1430px;font-size:22px;color:#4a5058;transform:scaleX(1.0016);">3.68 s</span>
<span class="t" id="t94" style="left:47.4px;top:1480px;font-size:22px;color:#4a5058;transform:scaleX(0.9483);">T...l</span>
<span class="t" id="t95" style="left:2477.3px;top:1480px;font-size:22px;color:#4a5058;transform:scaleX(1.0287);">14</span>
<span class="t" id="t96" style="left:3492.5px;top:1480px;font-size:22px;color:#4a5058;transform:scaleX(1.0016);">3.00 s</span>
</body></html>
